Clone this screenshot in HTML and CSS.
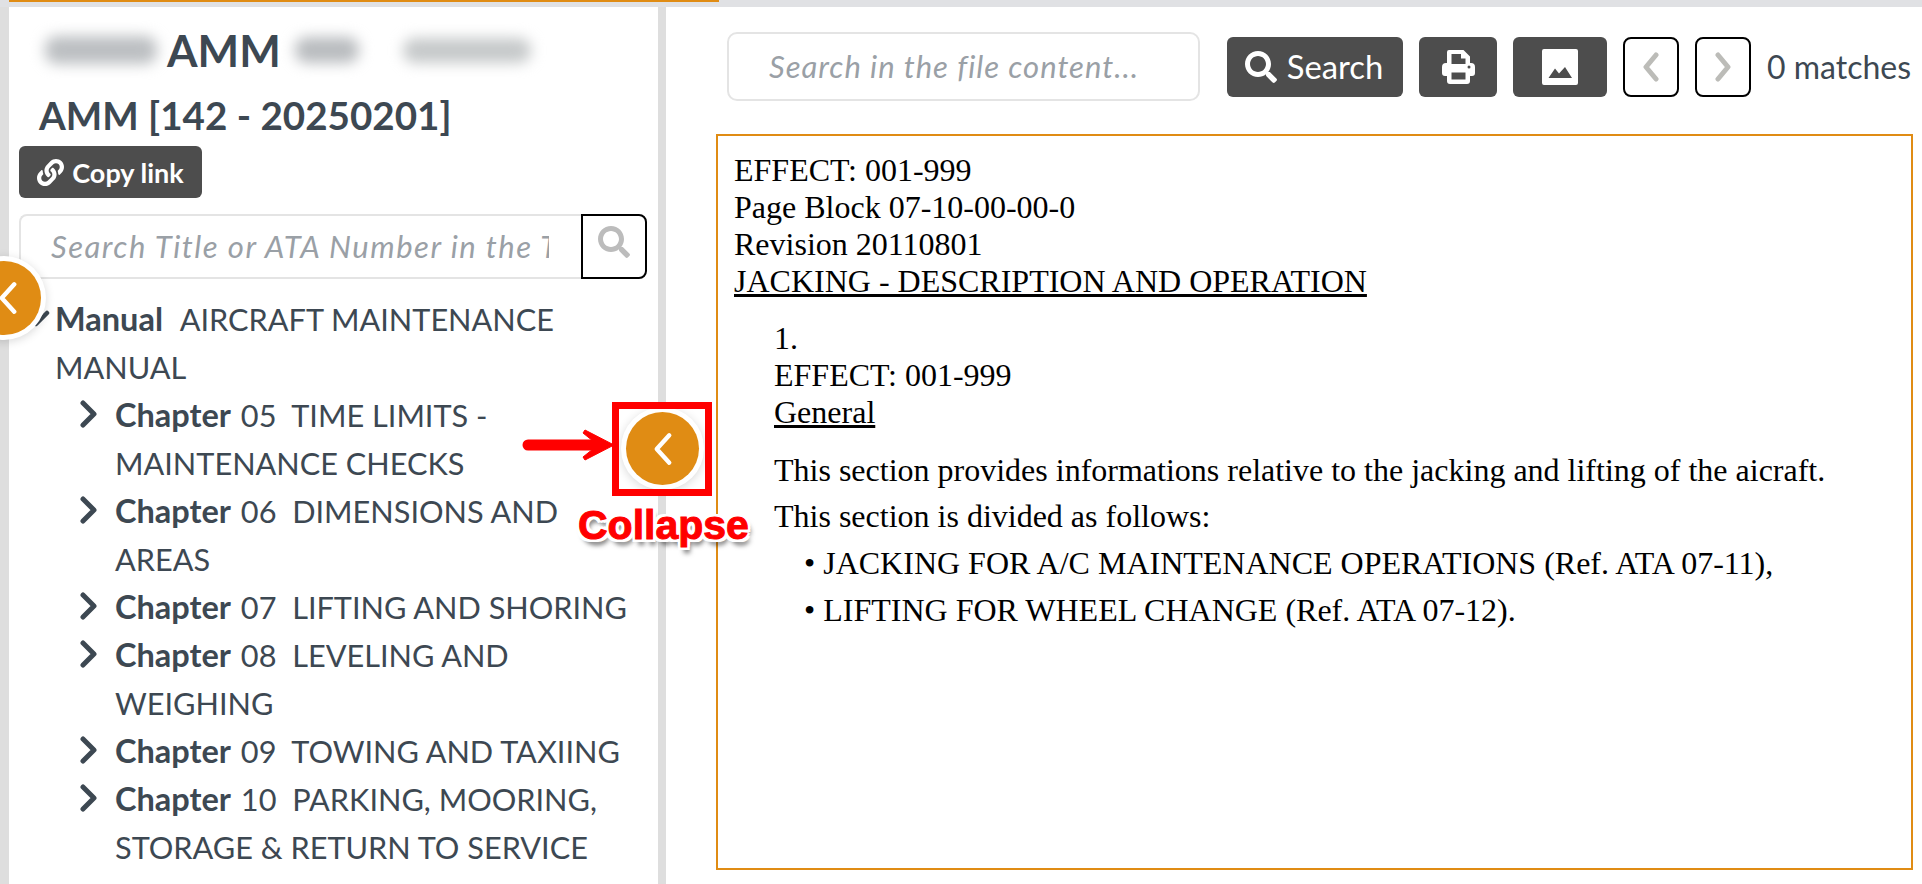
FILE: index.html
```html
<!DOCTYPE html>
<html lang="en">
<head>
    <meta charset="UTF-8">
    <title>AMM</title>
    <link rel="stylesheet" href="styles.css">
</head>
<body>

    <div class="progress"><div class="progress-fill"></div></div>

    <div class="layout">
        <!-- left tree panel -->
        <aside class="side">
            <div class="doc-title">
                <span class="blur blur-a"></span>
                <span class="doc-name">AMM</span>
                <span class="blur blur-b"></span>
                <span class="blur blur-c"></span>
            </div>
            <h2 class="doc-rev">AMM [142 - 20250201]</h2>
            <button class="btn copy-btn">
                <svg class="copy-icon" viewBox="0 0 512 512"><path fill="currentColor" d="M326.612 185.391c59.747 59.809 58.927 155.698.36 214.59-.11.12-.24.25-.36.37l-67.2 67.2c-59.27 59.27-155.699 59.262-214.96 0-59.27-59.26-59.27-155.7 0-214.96l37.106-37.106c9.84-9.84 26.786-3.3 27.294 10.606.648 17.722 3.826 35.527 9.69 52.721 1.986 5.822.567 12.262-3.783 16.612l-13.087 13.087c-28.026 28.026-28.905 73.66-1.155 101.96 28.024 28.579 74.086 28.749 102.325.51l67.2-67.19c28.191-28.191 28.073-73.757 0-101.83-3.701-3.694-7.429-6.564-10.341-8.569a16.037 16.037 0 0 1-6.947-12.606c-.396-10.567 3.348-21.456 11.698-29.806l21.054-21.055c5.521-5.521 14.182-6.199 20.584-1.731a152.482 152.482 0 0 1 20.522 17.197zM467.547 44.449c-59.261-59.262-155.69-59.27-214.96 0l-67.2 67.2c-.12.12-.25.25-.36.37-58.566 58.892-59.387 154.781.36 214.59a152.454 152.454 0 0 0 20.521 17.196c6.402 4.468 15.064 3.789 20.584-1.731l21.054-21.055c8.35-8.35 12.094-19.239 11.698-29.806a16.037 16.037 0 0 0-6.947-12.606c-2.912-2.005-6.64-4.875-10.341-8.569-28.073-28.073-28.191-73.639 0-101.83l67.2-67.19c28.239-28.239 74.3-28.069 102.325.51 27.75 28.3 26.872 73.934-1.155 101.96l-13.087 13.087c-4.35 4.35-5.769 10.79-3.783 16.612 5.864 17.194 9.042 34.999 9.69 52.721.509 13.906 17.454 20.446 27.294 10.606l37.106-37.106c59.271-59.259 59.271-155.699.001-214.959z"/></svg>
                Copy link
            </button>
            <div class="tree-search">
                <input class="input tree-input" placeholder="Search Title or ATA Number in the Tree">
                <button class="tree-search-btn">
                    <svg class="search-icon" viewBox="0 0 512 512"><path fill="currentColor" d="M505 442.7L405.3 343c-4.5-4.5-10.6-7-17-7H372c27.6-35.3 44-79.7 44-128C416 93.1 322.9 0 208 0S0 93.1 0 208s93.1 208 208 208c48.3 0 92.7-16.4 128-44v16.3c0 6.4 2.5 12.5 7 17l99.7 99.7c9.4 9.4 24.6 9.4 33.9 0l28.3-28.3c9.4-9.4 9.4-24.6.1-34zM208 336c-70.7 0-128-57.2-128-128 0-70.7 57.2-128 128-128 70.7 0 128 57.2 128 128 0 70.7-57.2 128-128 128z"/></svg>
                </button>
            </div>
            <ul class="tree">
                <li class="tree-root"><svg class="chev-down" viewBox="0 0 28 18"><path d="M3 3l11 11L25 3"/></svg><span><b>Manual</b>&nbsp; AIRCRAFT MAINTENANCE MANUAL</span></li>
                <li class="tree-item"><svg class="chev" viewBox="0 0 18 28"><path d="M3 3l11 11L3 25"/></svg><span><b>Chapter</b> 05&nbsp; TIME LIMITS -<br>MAINTENANCE CHECKS</span></li>
                <li class="tree-item"><svg class="chev" viewBox="0 0 18 28"><path d="M3 3l11 11L3 25"/></svg><span><b>Chapter</b> 06&nbsp; DIMENSIONS AND<br>AREAS</span></li>
                <li class="tree-item"><svg class="chev" viewBox="0 0 18 28"><path d="M3 3l11 11L3 25"/></svg><span><b>Chapter</b> 07&nbsp; LIFTING AND SHORING</span></li>
                <li class="tree-item"><svg class="chev" viewBox="0 0 18 28"><path d="M3 3l11 11L3 25"/></svg><span><b>Chapter</b> 08&nbsp; LEVELING AND<br>WEIGHING</span></li>
                <li class="tree-item"><svg class="chev" viewBox="0 0 18 28"><path d="M3 3l11 11L3 25"/></svg><span><b>Chapter</b> 09&nbsp; TOWING AND TAXIING</span></li>
                <li class="tree-item"><svg class="chev" viewBox="0 0 18 28"><path d="M3 3l11 11L3 25"/></svg><span><b>Chapter</b> 10&nbsp; PARKING, MOORING,<br>STORAGE &amp; RETURN TO SERVICE</span></li>
            </ul>
        </aside>

        <!-- file content -->
        <main class="main">
            <div class="toolbar">
                <input class="input file-input" placeholder="Search in the file content...">
                <button class="btn search-btn">
                    <svg class="search-icon" viewBox="0 0 512 512"><path fill="currentColor" d="M505 442.7L405.3 343c-4.5-4.5-10.6-7-17-7H372c27.6-35.3 44-79.7 44-128C416 93.1 322.9 0 208 0S0 93.1 0 208s93.1 208 208 208c48.3 0 92.7-16.4 128-44v16.3c0 6.4 2.5 12.5 7 17l99.7 99.7c9.4 9.4 24.6 9.4 33.9 0l28.3-28.3c9.4-9.4 9.4-24.6.1-34zM208 336c-70.7 0-128-57.2-128-128 0-70.7 57.2-128 128-128 70.7 0 128 57.2 128 128 0 70.7-57.2 128-128 128z"/></svg>
                    Search
                </button>
                <button class="btn print-btn">
                    <svg class="print-icon" viewBox="0 0 33 34"><path fill="currentColor" fill-rule="evenodd" d="M7 0h14.500L28 6.500V13h1a4 4 0 0 1 4 4v6a3 3 0 0 1-3 3h-2v5a3 3 0 0 1-3 3H8a3 3 0 0 1-3-3v-5H3a3 3 0 0 1-3-3v-6a4 4 0 0 1 4-4h1V2a2 2 0 0 1 2-2zM9.500 4v10h14V8.500h-4.500V4zM9.500 22.500v7h14v-7z"/><circle cx="27" cy="17" r="1.500" fill="#4d4d4d"/></svg>
                </button>
                <button class="btn image-btn">
                    <svg class="image-icon" viewBox="0 0 36 36"><path fill="currentColor" fill-rule="evenodd" d="M2 0h32a2 2 0 0 1 2 2v32a2 2 0 0 1-2 2H2a2 2 0 0 1-2-2V2a2 2 0 0 1 2-2zM6.500 29h23.500L23 18l-6 6.500-4-5z"/></svg>
                </button>
                <button class="nav-btn"><svg class="nav-chev" viewBox="0 0 18 30"><path d="M14 3L4 15l10 12"/></svg></button>
                <button class="nav-btn"><svg class="nav-chev" viewBox="0 0 18 30"><path d="M4 3l10 12L4 27"/></svg></button>
                <span class="matches">0 matches</span>
            </div>
            <div class="doc">
                <div>EFFECT: 001-999</div>
                <div>Page Block 07-10-00-00-0</div>
                <div>Revision 20110801</div>
                <div><u>JACKING - DESCRIPTION AND OPERATION</u></div>
                <div class="doc-sec">
                    <div>1.</div>
                    <div>EFFECT: 001-999</div>
                    <div><u>General</u></div>
                    <p class="doc-first">This section provides informations relative to the jacking and lifting of the aicraft.</p>
                    <p>This section is divided as follows:</p>
                    <ul>
                        <li>JACKING FOR A/C MAINTENANCE OPERATIONS (Ref. ATA 07-11),</li>
                        <li>LIFTING FOR WHEEL CHANGE (Ref. ATA 07-12).</li>
                    </ul>
                </div>
            </div>
        </main>
    </div>

    <!-- floating round buttons and the annotation drawn over the shot -->
    <div class="fab fab-edge"><svg class="fab-chev" viewBox="0 0 20 32"><path d="M15 5L5 16l10 11"/></svg></div>
    <div class="fab fab-mid"><svg class="fab-chev" viewBox="0 0 20 32"><path d="M15 5L5 16l10 11"/></svg></div>
    <div class="mark-box"></div>
    <svg class="mark-arrow" viewBox="0 0 92 34"><path class="mark-shaft" d="M6 17h72"/><path class="mark-head" d="M63 2l29 15-29 15-2-3 15-12-15-12z"/></svg>
    <div class="mark-label">Collapse</div>

</body>
</html>
```

FILE: styles.css
```css
* { box-sizing: border-box; }
html, body { height: 100%; }
body { margin: 0; background: #fff; font-family: "Lato", "Open Sans", sans-serif; color: #3d4852; overflow: hidden; }

.progress { height: 7px; background: #e0e1e4; }
.progress-fill { width: 710px; height: 2px; margin-left: 9px; background: #e08c14; }

.layout { display: flex; height: 877px; }

/* left panel */
.side { width: 666px; flex: none; padding: 8px 19px 0 10px; border-left: 9px solid #dedede; border-right: 8px solid #dedede; overflow: hidden; }
.doc-title { position: relative; display: flex; align-items: center; height: 70px; }
.doc-name { margin-left: 148px; font-size: 44px; font-weight: 700; line-height: 70px; }
.blur { position: absolute; display: block; filter: blur(7px); border-radius: 12px; }
.blur-a { left: 26px; top: 21px; width: 112px; height: 28px; background: #bcbfc2; }
.blur-b { left: 276px; top: 22px; width: 64px; height: 26px; background: #b9bcbf; }
.blur-c { left: 384px; top: 23px; width: 128px; height: 25px; background: #c6c9ca; }
.doc-rev { margin: 7px 0 0 20px; font-size: 38.600px; line-height: 46px; font-weight: 700; white-space: nowrap; }

.btn { display: inline-flex; align-items: center; justify-content: center; border: none; border-radius: 6px; background: #4d4d4d; color: #fff; font-family: inherit; }
.copy-btn { width: 183px; height: 52px; margin-top: 8px; gap: 8px; font-size: 27px; font-weight: 700; }
.copy-icon { width: 27px; height: 27px; }

.input { border: 2px solid #e4e4e4; border-radius: 8px; background: #fff; font-family: inherit; font-style: italic; font-size: 31px; outline: none; }
.input::placeholder { color: #9aa0a6; opacity: 1; }

.tree-search { display: flex; width: 628px; height: 65px; margin-top: 16px; }
.tree-input { flex: 1; min-width: 0; padding: 0 32px 2px 30px; border-right: none; border-radius: 8px 0 0 8px; letter-spacing: 1.5px; }
.tree-search-btn { width: 66px; flex: none; padding: 0; border: 2px solid #000; border-radius: 0 8px 8px 0; background: #fff; color: #bcbcbc; }
.tree-search-btn .search-icon { width: 32px; height: 32px; margin-bottom: 6px; }

.tree { list-style: none; margin: 17px 0 0; padding: 0; font-size: 30.700px; line-height: 48px; }
.tree b { font-size: 32.500px; line-height: 1; font-weight: 700; margin-right: 2px; }
.tree-root { display: flex; width: 560px; }
.chev-down { width: 28px; height: 18px; flex: none; margin: 14px 5px 0 3px; fill: none; stroke: #3d4852; stroke-width: 4.500; stroke-linecap: round; stroke-linejoin: round; }
.tree-item { display: flex; margin-left: 61px; width: 570px; }
.chev { width: 18px; height: 28px; flex: none; margin: 8px 17px 0 0; fill: none; stroke: #3d4852; stroke-width: 5; stroke-linecap: round; stroke-linejoin: round; }

/* right side */
.main { flex: 1; min-width: 0; padding: 25px 9px 0 50px; }
.toolbar { display: flex; align-items: center; height: 69px; white-space: nowrap; }
.file-input { width: 473px; height: 69px; margin: 0 27px 0 11px; padding: 0 40px 2px; border-radius: 10px; letter-spacing: 1px; }
.search-btn { width: 176px; height: 60px; gap: 10px; font-size: 32.800px; }
.search-btn .search-icon { width: 32px; height: 34px; margin-left: -2px; }
.print-btn { width: 78px; height: 60px; margin-left: 16px; }
.print-icon { width: 33px; height: 34px; }
.image-btn { width: 94px; height: 60px; margin-left: 16px; }
.image-icon { width: 36px; height: 36px; }
.nav-btn { width: 56px; height: 60px; margin-left: 16px; padding: 0; border: 2px solid #000; border-radius: 8px; background: #fff; display: flex; align-items: center; justify-content: center; }
.nav-chev { width: 18px; height: 30px; fill: none; stroke: #bcbcb8; stroke-width: 5; stroke-linecap: round; stroke-linejoin: round; }
.matches { margin-left: 16px; font-size: 32px; }

.doc { height: 736px; margin-top: 33px; padding: 16px 16px; border: 2px solid #e08c14; font-family: "Liberation Serif", serif; font-size: 32px; line-height: 37px; color: #000; }
.doc-sec { margin: 20px 0 0 40px; }
.doc-sec p { margin: 9px 0 0; line-height: 37px; }
.doc-sec .doc-first { margin-top: 21px; }
.doc-sec ul { margin: 5px 0 0; padding-left: 30px; list-style: none; }
.doc-sec li { line-height: 47px; }
.doc-sec li::before { content: "\2022\00a0"; }

/* round collapse buttons */
.fab { position: absolute; display: flex; align-items: center; justify-content: center; border-radius: 50%; background: #e08c14; box-shadow: 0 0 0 5px #fff, 0 2px 10px 5px rgba(0,0,0,0.15); }
.fab-edge { left: -33px; top: 261px; width: 74px; height: 74px; justify-content: flex-end; padding-right: 20px; }
.fab-mid { left: 626px; top: 412px; width: 73px; height: 73px; }
.fab-chev { width: 26px; height: 40px; flex: none; fill: none; stroke: #fff; stroke-width: 3.500; stroke-linecap: round; stroke-linejoin: round; }

/* annotation */
.mark-box { position: absolute; left: 612px; top: 402px; width: 100px; height: 94px; border: 7px solid #f00; }
.mark-arrow { position: absolute; left: 522px; top: 428px; width: 92px; height: 34px; }
.mark-shaft { fill: none; stroke: #f00; stroke-width: 11; stroke-linecap: round; }
.mark-head { fill: #f00; stroke: #f00; stroke-width: 1; stroke-linejoin: round; }
.mark-label { position: absolute; left: 578px; top: 497px; font-family: "Liberation Sans", sans-serif; font-weight: 700; font-size: 41px; line-height: 56px; color: #f00; -webkit-text-stroke: 1px #f00; text-shadow: 3px 0 0 #fff, -3px 0 0 #fff, 0 3px 0 #fff, 0 -3px 0 #fff, 3px 3px 0 #fff, -3px 3px 0 #fff, 3px -3px 0 #fff, -3px -3px 0 #fff, 3px 6px 5px rgba(0,0,0,0.6); }
```
